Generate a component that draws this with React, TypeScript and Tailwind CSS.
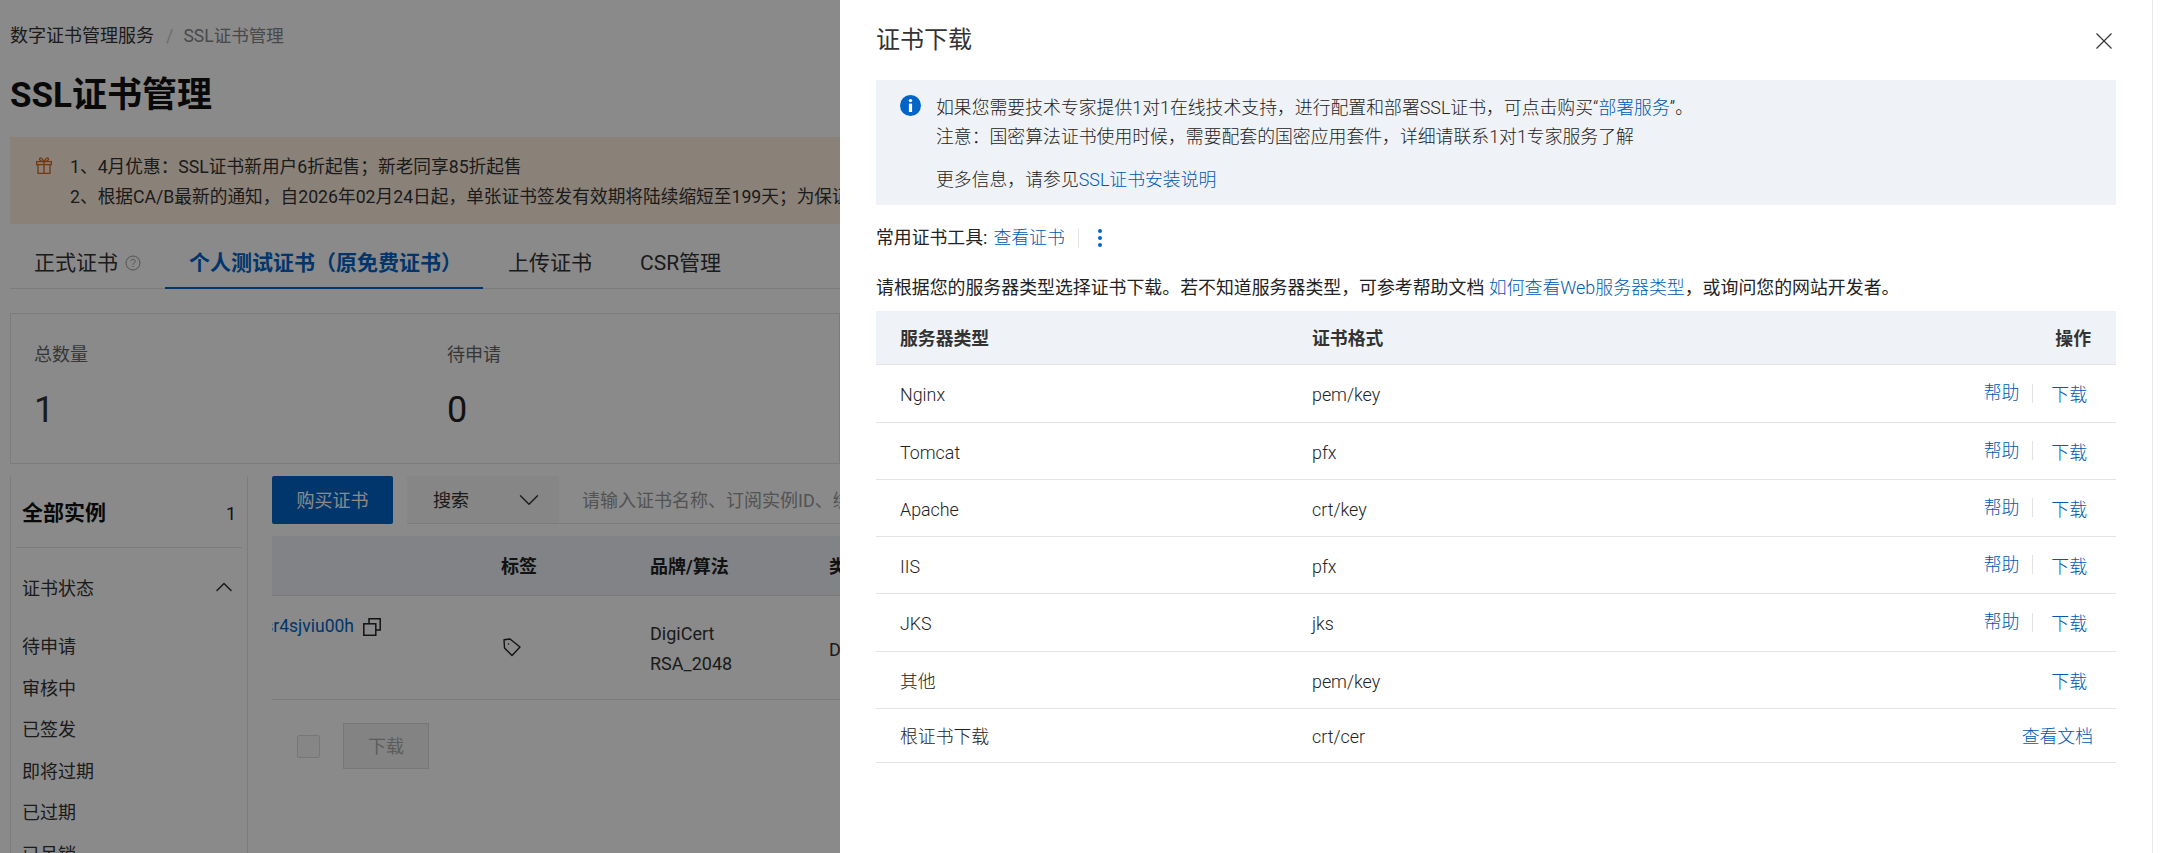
import { ChevronDown, ChevronUp } from "lucide-react";

const servers = [
  { name: "Nginx", format: "pem/key", help: true, rowClass: "h-[58px]" },
  { name: "Tomcat", format: "pfx", help: true, rowClass: "h-[57px]" },
  { name: "Apache", format: "crt/key", help: true, rowClass: "h-[57px]" },
  { name: "IIS", format: "pfx", help: true, rowClass: "h-[57px]" },
  { name: "JKS", format: "jks", help: true, rowClass: "h-[58px]" },
  { name: "其他", format: "pem/key", help: false, rowClass: "h-[57px]" },
];

const statusItems = ["待申请", "审核中", "已签发", "即将过期", "已过期", "已吊销"];

function GiftIcon() {
  return (
    <svg width="16" height="17" viewBox="0 0 16 17" fill="none" stroke="#d9661a" strokeWidth="1.3">
      <rect x="0.6" y="4.6" width="14.8" height="3" />
      <path d="M2 7.6V16.4H14V7.6M8 4.6V16.4" />
      <path d="M8 4.6C6.5 1.2 4 0 3.6 1.6 3.2 3.2 5 4.6 8 4.6ZM8 4.6C9.5 1.2 12 0 12.4 1.6 12.8 3.2 11 4.6 8 4.6Z" />
    </svg>
  );
}

function InfoIcon() {
  return (
    <svg width="21" height="21" viewBox="0 0 21 21">
      <circle cx="10.5" cy="10.5" r="10.5" fill="#0064c8" />
      <circle cx="10.5" cy="5.6" r="1.7" fill="#fff" />
      <rect x="8.9" y="8.6" width="3.2" height="8.4" fill="#fff" />
    </svg>
  );
}

function CloseIcon() {
  return (
    <svg width="16" height="16" viewBox="0 0 16 16" stroke="#333" strokeWidth="1.2">
      <path d="M0.5 0.5L15.5 15.5M15.5 0.5L0.5 15.5" />
    </svg>
  );
}

function TagIcon() {
  return (
    <svg width="18" height="19" viewBox="0 0 18 19" fill="none" stroke="#222" strokeWidth="1.4">
      <path d="M1 1.7L7 1 17 9 9 17.5 1.5 10Z" strokeLinejoin="round" />
      <circle cx="5.5" cy="6" r="0.8" fill="#222" stroke="none" />
    </svg>
  );
}

function CopyIcon() {
  return (
    <svg width="18" height="18" viewBox="0 0 18 18" fill="none" stroke="#222" strokeWidth="1.5">
      <rect x="0.8" y="5.8" width="12" height="11.5" />
      <path d="M6 5.8V0.8H17.2V12H13" />
    </svg>
  );
}

function HelpIcon() {
  return (
    <svg width="16" height="16" viewBox="0 0 16 16" fill="none" stroke="#999" strokeWidth="1">
      <circle cx="8" cy="8" r="7" />
      <path d="M5.8 6.2C5.8 3.6 10.2 3.6 10.2 6.2 10.2 7.8 8 7.8 8 9.8M8 11V12" />
    </svg>
  );
}

function BackgroundPage() {
  return (
    <div className="flex w-[840px] flex-col overflow-hidden pl-[10px]">
      <div className="mt-[24px] flex h-[24px] items-center whitespace-nowrap text-[18px] leading-[24px]">
        <span className="text-[#333]">数字证书管理服务</span>
        <span className="ml-[12px] text-[#ccc]">/</span>
        <span className="ml-[10px] text-[17.5px] text-[#888]">SSL证书管理</span>
      </div>
      <h1 className="mt-[26px] text-[35px] font-bold leading-[44px] text-[#111]">SSL证书管理</h1>

      <div className="mt-[19px] flex h-[87px] flex-col justify-center bg-[#fff0e0] pl-[60px] pt-[3px] text-[17.7px] leading-[30px] text-[#333]">
        <div className="relative whitespace-nowrap">
          <span className="absolute -left-[34px] top-[5px]">
            <GiftIcon />
          </span>
          1、4月优惠：SSL证书新用户6折起售；新老同享85折起售
        </div>
        <div className="whitespace-nowrap">
          2、根据CA/B最新的通知，自2026年02月24日起，单张证书签发有效期将陆续缩短至199天；为保证业务连续性
        </div>
      </div>

      <div className="flex h-[65px] items-end whitespace-nowrap border-b border-[#e5e5e5] text-[21px] leading-[28px] text-[#333]">
        <div className="flex items-center gap-[7px] pb-[11px] pl-[24px] pr-[24px]">
          <span>正式证书</span>
          <HelpIcon />
        </div>
        <div className="-mb-px border-b-2 border-[#0064c8] pb-[10px] pl-[24px] pr-[21px] font-bold text-[#0064c8]">
          个人测试证书（原免费证书）
        </div>
        <div className="pb-[11px] pl-[25px]">上传证书</div>
        <div className="pb-[11px] pl-[48px]">CSR管理</div>
      </div>

      <div className="mt-[24px] grid h-[151px] grid-cols-[413px_413px_1fr] border border-[#e5e5e5] pl-[23px] pt-[28px]">
        <div>
          <div className="text-[18px] leading-[26px] text-[#666]">总数量</div>
          <div className="mt-[22px] text-[36px] leading-[40px] text-[#333]">1</div>
        </div>
        <div>
          <div className="text-[18px] leading-[26px] text-[#666]">待申请</div>
          <div className="mt-[22px] text-[36px] leading-[40px] text-[#222]">0</div>
        </div>
      </div>

      <div className="mt-[12px] flex">
        <div className="h-[500px] w-[238px] shrink-0 border-x border-[#e5e5e5] px-[5px]">
          <div className="flex h-[72px] items-center justify-between border-b border-[#e5e5e5] px-[6px] pt-[4px]">
            <span className="text-[21px] font-bold text-[#111]">全部实例</span>
            <span className="text-[18px] text-[#222]">1</span>
          </div>
          <div className="mt-[28px] flex h-[26px] items-center justify-between px-[6px] text-[18px] leading-[26px] text-[#333]">
            <span>证书状态</span>
            <ChevronUp className="-mr-[2px] -mt-[4px] size-[28px] text-[#333]" strokeWidth={1.3} />
          </div>
          <div className="mt-[24px] flex flex-col px-[6px] text-[18px] leading-[41.5px] text-[#333]">
            {statusItems.map((item) => (
              <div key={item}>{item}</div>
            ))}
          </div>
        </div>

        <div className="ml-[24px] w-[700px] shrink-0">
          <div className="flex h-[48px]">
            <button className="w-[121px] shrink-0 rounded-[2px] bg-[#0064c8] text-[18px] text-white">购买证书</button>
            <div className="ml-[14px] flex flex-1 border-b border-[#e5e5e5] bg-white">
              <div className="flex w-[152px] shrink-0 items-center justify-between bg-[#f7f7f7] pl-[26px] pr-[13px] pt-[1px] text-[18px] text-[#333]">
                <span>搜索</span>
                <ChevronDown className="size-[34px]" strokeWidth={1} />
              </div>
              <div className="flex items-center whitespace-nowrap pl-[23px] pt-[1px] text-[18px] text-[#999]">
                请输入证书名称、订阅实例ID、绑定域名进行搜索
              </div>
            </div>
          </div>

          <div className="mt-[12px] grid h-[60px] grid-cols-[229px_149px_179px_1fr] items-center border-b border-[#e0e0e0] bg-[#eff2f7] pt-[2px] text-[18px] font-bold text-[#222]">
            <span />
            <span>标签</span>
            <span>品牌/算法</span>
            <span>类型</span>
          </div>

          <div className="grid h-[104px] grid-cols-[229px_149px_179px_1fr] items-center border-b border-[#e5e5e5] text-[18px] text-[#333]">
            <div className="-mt-[42px] flex items-center">
              <div className="flex w-[82px] justify-end overflow-hidden">
                <span className="whitespace-nowrap text-[17.5px] text-[#0064c8]">sr4sjviu00h</span>
              </div>
              <span className="ml-[9px]">
                <CopyIcon />
              </span>
            </div>
            <div className="pl-[2px]">
              <TagIcon />
            </div>
            <div className="pt-[3px] leading-[30px]">
              <div>DigiCert</div>
              <div>RSA_2048</div>
            </div>
            <div className="pt-[3px]">DV</div>
          </div>

          <div className="mt-[23px] flex h-[46px] items-center">
            <span className="ml-[25px] size-[23px] rounded-[2px] border border-[#ddd] bg-[#f7f7f7]" />
            <button className="ml-[23px] h-[46px] w-[86px] border border-[#ddd] bg-[#f3f3f3] text-[18px] text-[#aaa]">
              下载
            </button>
          </div>
        </div>
      </div>
    </div>
  );
}

function DownloadDrawer() {
  return (
    <div className="absolute bottom-0 right-0 top-0 flex w-[1323px] bg-white text-[17.85px] font-light text-[#222]">
      <div className="flex-1 px-[36px] pt-[26px]">
        <div className="flex h-[28px] items-center justify-between">
          <span className="text-[24px] font-normal text-[#333]">证书下载</span>
          <span className="mr-[4px] mt-[2px]">
            <CloseIcon />
          </span>
        </div>

        <div className="mt-[26px] flex h-[125px] bg-[#eff2f7] px-[24px] pt-[13px] leading-[29px]">
          <span className="mt-[2px] shrink-0">
            <InfoIcon />
          </span>
          <div className="ml-[15px]">
            <div>
              如果您需要技术专家提供1对1在线技术支持，进行配置和部署SSL证书，可点击购买“
              <span className="text-[#0058b0]">部署服务</span>”。
            </div>
            <div>注意：国密算法证书使用时候，需要配套的国密应用套件，详细请联系1对1专家服务了解</div>
            <div className="mt-[14px]">
              更多信息，请参见<span className="text-[#0058b0]">SSL证书安装说明</span>
            </div>
          </div>
        </div>

        <div className="mt-[23px] flex h-[20px] items-center">
          <span className="font-normal">常用证书工具:</span>
          <span className="ml-[6px] text-[#0058b0]">查看证书</span>
          <span className="ml-[13px] h-[20px] w-px bg-[#e5e5e5]" />
          <span className="ml-[19px] flex flex-col gap-[3px]">
            <span className="size-[4px] rounded-full bg-[#0064c8]" />
            <span className="size-[4px] rounded-full bg-[#0064c8]" />
            <span className="size-[4px] rounded-full bg-[#0064c8]" />
          </span>
        </div>

        <div className="mt-[28px] text-[17.9px] font-normal leading-[24px]">
          请根据您的服务器类型选择证书下载。若不知道服务器类型，可参考帮助文档{" "}
          <span className="font-light text-[#0058b0]">如何查看Web服务器类型</span>，或询问您的网站开发者。
        </div>

        <div className="mt-[11px]">
          <div className="grid h-[54px] grid-cols-[412px_1fr_auto] items-center border-b border-[#e3e3e3] bg-[#eff2f7] pl-[24px] pr-[25px] pt-[3px] font-bold text-[#333]">
            <span>服务器类型</span>
            <span>证书格式</span>
            <span>操作</span>
          </div>
          {servers.map((row) => (
            <div
              key={row.name}
              className={`grid grid-cols-[412px_1fr_auto] items-center border-b border-[#e3e3e3] pl-[24px] pr-[29px] pt-[4px] ${row.rowClass}`}
            >
              <span>{row.name}</span>
              <span>{row.format}</span>
              <div className="flex items-center">
                {row.help && (
                  <>
                    <span className="-mt-[4px] text-[#0058b0]">帮助</span>
                    <span className="-mt-[4px] ml-[13px] h-[19px] w-px bg-[#e3e3e3]" />
                  </>
                )}
                <span className="ml-[18px] text-[#0058b0]">下载</span>
              </div>
            </div>
          ))}
          <div className="grid h-[54px] grid-cols-[412px_1fr_auto] items-center border-b border-[#e3e3e3] pl-[24px] pr-[23px] pt-[3px]">
            <span>根证书下载</span>
            <span>crt/cer</span>
            <span className="text-[#0058b0]">查看文档</span>
          </div>
        </div>
      </div>
      <div className="w-[11px] shrink-0 border-l border-[#e8e8e8]" />
    </div>
  );
}

export default function App() {
  return (
    <div className="relative h-[853px] w-[2163px] overflow-hidden bg-white font-['Roboto','Noto_Sans_CJK_SC',sans-serif]">
      <BackgroundPage />
      <div className="absolute inset-0 bg-black/[0.46]" />
      <DownloadDrawer />
    </div>
  );
}
